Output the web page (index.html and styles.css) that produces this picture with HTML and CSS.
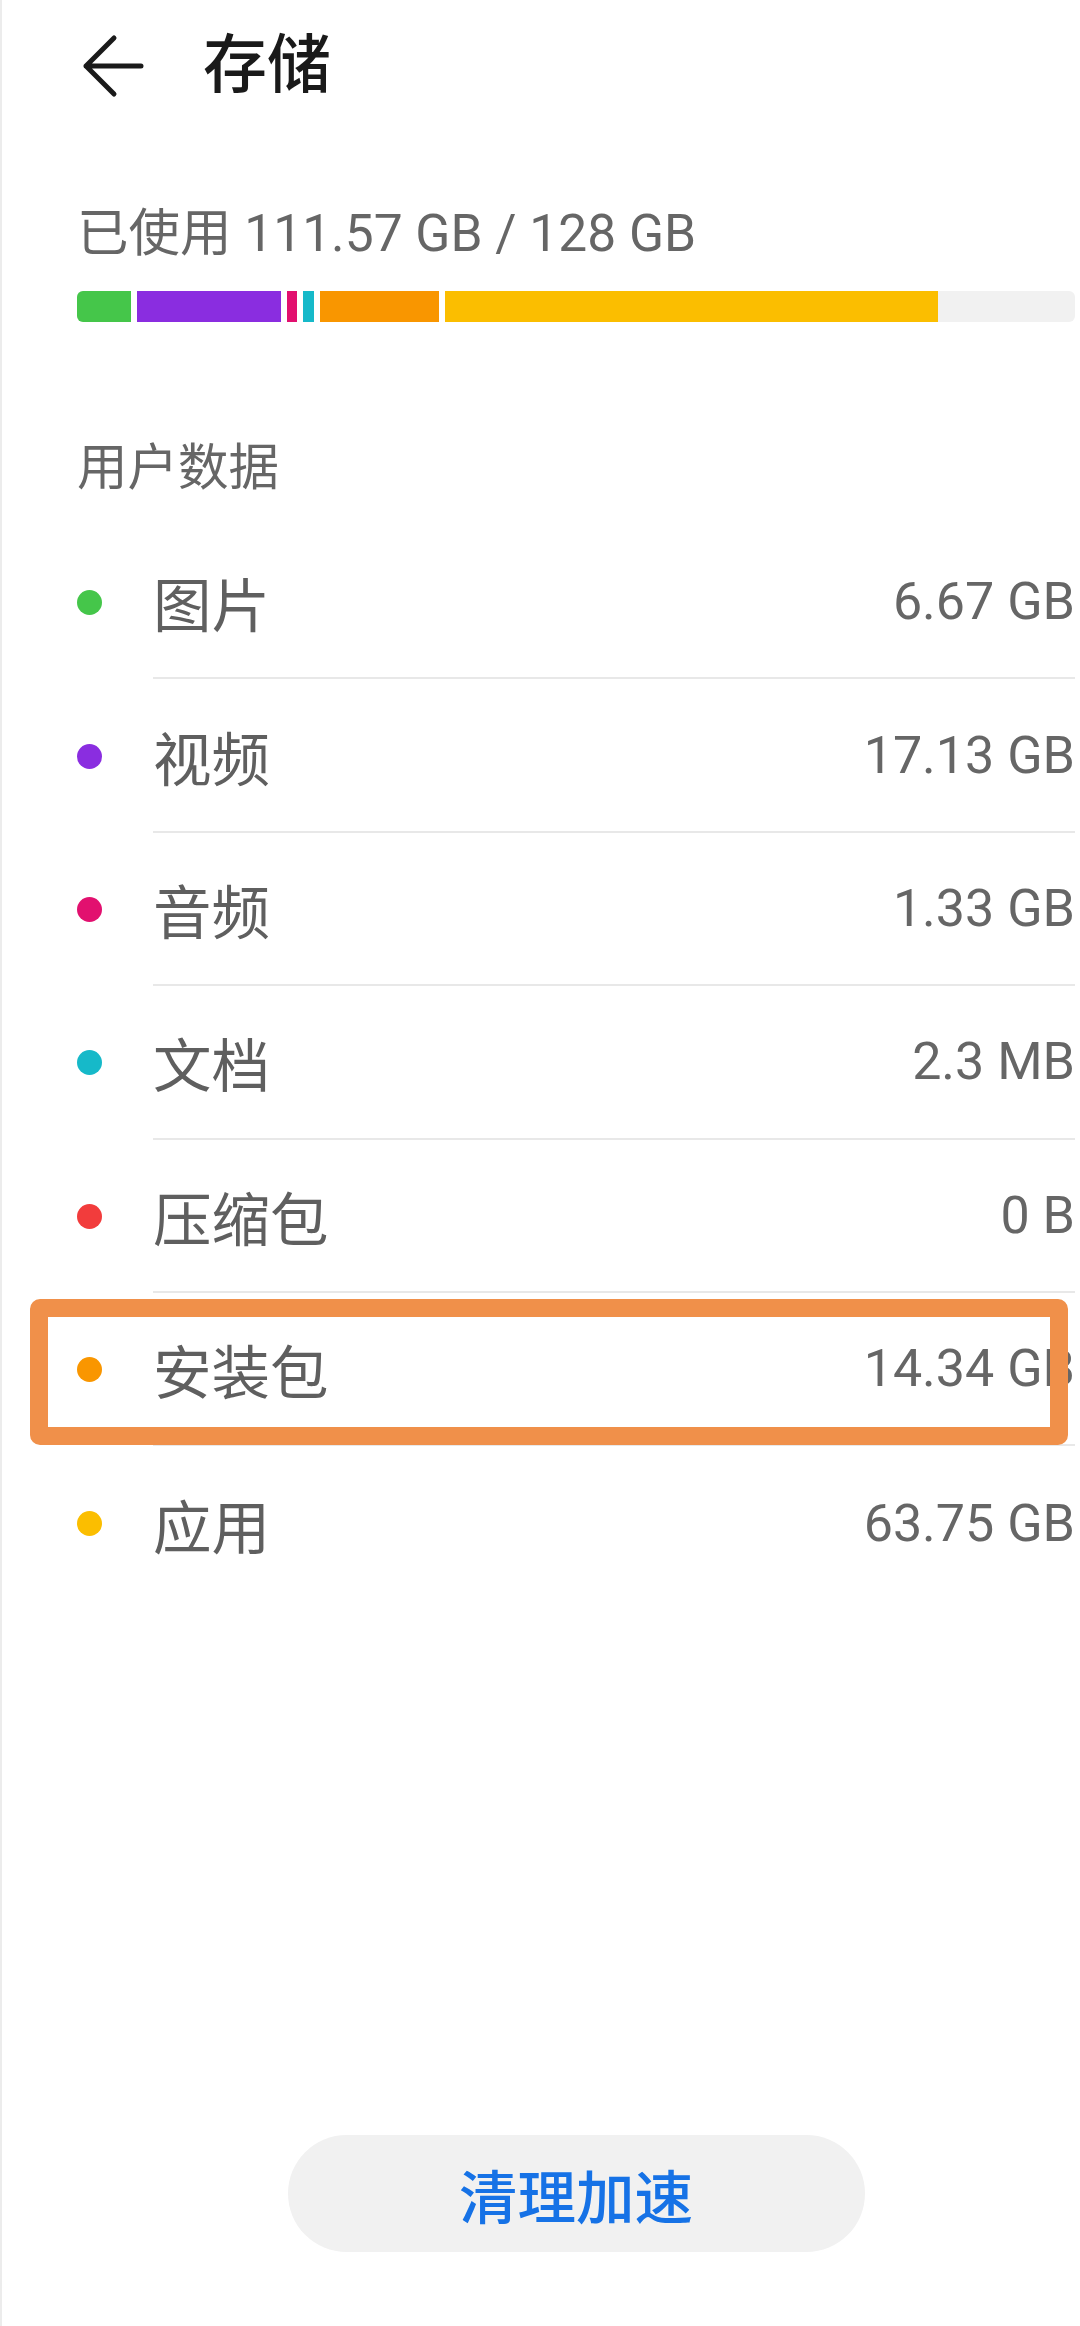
FILE: index.html
```html
<!DOCTYPE html>
<html lang="zh-CN">
<head>
    <meta charset="UTF-8">
    <meta name="viewport" content="width=device-width, initial-scale=1.0">
    <title>存储</title>
    <link rel="stylesheet" href="styles.css">
</head>
<body>
    <div class="page">
        <header class="topbar">
            <svg class="back" viewBox="0 0 64 64" aria-hidden="true">
                <path d="M34 4 L6 32 L34 60 M6 32 H61" fill="none" stroke="#1a1a1a" stroke-width="5" stroke-linecap="round" stroke-linejoin="round"/>
            </svg>
            <h1 class="title">存储</h1>
        </header>

        <p class="usage">已使用 111.57 GB / 128 GB</p>
        <div class="bar">
            <span class="seg green" style="width: 60px"></span>
            <span class="seg purple" style="width: 150px"></span>
            <span class="seg magenta" style="width: 16px"></span>
            <span class="seg cyan" style="width: 17px"></span>
            <span class="seg orange" style="width: 125px"></span>
            <span class="seg yellow" style="width: 493px"></span>
        </div>

        <h2 class="section">用户数据</h2>
        <ul class="list">
            <li class="row">
                <span class="dot green"></span>
                <div class="row-main"><span class="label">图片</span><span class="value">6.67 GB</span></div>
            </li>
            <li class="row">
                <span class="dot purple"></span>
                <div class="row-main"><span class="label">视频</span><span class="value">17.13 GB</span></div>
            </li>
            <li class="row">
                <span class="dot magenta"></span>
                <div class="row-main"><span class="label">音频</span><span class="value">1.33 GB</span></div>
            </li>
            <li class="row">
                <span class="dot cyan"></span>
                <div class="row-main"><span class="label">文档</span><span class="value">2.3 MB</span></div>
            </li>
            <li class="row">
                <span class="dot red"></span>
                <div class="row-main"><span class="label">压缩包</span><span class="value">0 B</span></div>
            </li>
            <li class="row">
                <span class="dot orange"></span>
                <div class="row-main"><span class="label">安装包</span><span class="value">14.34 GB</span></div>
                <span class="highlight"></span>
            </li>
            <li class="row">
                <span class="dot yellow"></span>
                <div class="row-main"><span class="label">应用</span><span class="value">63.75 GB</span></div>
            </li>
        </ul>

        <button type="button" class="btn-clean">清理加速</button>
    </div>
</body>
</html>
```

FILE: styles.css
```css
* {
    box-sizing: border-box;
}

body {
    margin: 0;
    background: #fff;
    font-family: Roboto, "Noto Sans CJK SC", sans-serif;
}

.page {
    display: flex;
    flex-direction: column;
    width: 1080px;
    min-height: 2326px;
    padding: 0 5px 74px 75px;
    border-left: 2px solid #ececec;
}

.topbar {
    display: flex;
    align-items: center;
    height: 132px;
}

.back {
    width: 64px;
    height: 64px;
    margin-left: 3px;
    overflow: visible;
}

.title {
    margin: 0 0 0 59px;
    font-size: 64px;
    font-weight: 500;
    line-height: 1;
    color: #1a1a1a;
}

.usage {
    margin: 72px 0 0;
    font-size: 51.5px;
    line-height: 60px;
    color: #666;
}

.bar {
    display: flex;
    height: 31px;
    margin-top: 27px;
    border-radius: 6px;
    overflow: hidden;
    background: #f1f1f1;
}

.seg {
    height: 100%;
    border-right: 6px solid #fff;
}

.seg.yellow {
    border-right: 0;
}

.section {
    margin: 116px 0 0;
    font-size: 50.5px;
    font-weight: 400;
    line-height: 60px;
    color: #666;
}

.list {
    list-style: none;
    margin: 28px 0 0;
    padding: 0;
}

.row {
    position: relative;
    display: flex;
    align-items: center;
    height: 153.4px;
}

.dot {
    width: 25px;
    height: 25px;
    margin: 0 51px 0 0;
    border-radius: 50%;
    flex-shrink: 0;
}

.row-main {
    display: flex;
    align-items: center;
    justify-content: space-between;
    flex: 1;
    height: 100%;
    border-bottom: 2px solid #e8e8e8;
}

.row:last-child .row-main {
    border-bottom: 0;
}

.label {
    font-size: 58.5px;
    color: #5f5f5f;
}

.value {
    font-size: 52px;
    color: #666;
}

.highlight {
    position: absolute;
    top: 6px;
    left: -47px;
    width: 1038px;
    height: 146px;
    border: 18px solid #f0904a;
    border-radius: 10px;
}

.green { background: #45c64a; }
.purple { background: #8a2de0; }
.magenta { background: #e2106f; }
.cyan { background: #16b9c9; }
.red { background: #f23c3c; }
.orange { background: #f99600; }
.yellow { background: #fbbe00; }

.btn-clean {
    align-self: center;
    width: 577px;
    height: 117px;
    margin-top: auto;
    border: 0;
    border-radius: 59px;
    background: #f1f1f1;
    font-family: inherit;
    font-size: 58.5px;
    font-weight: 500;
    color: #1672e6;
}
```
